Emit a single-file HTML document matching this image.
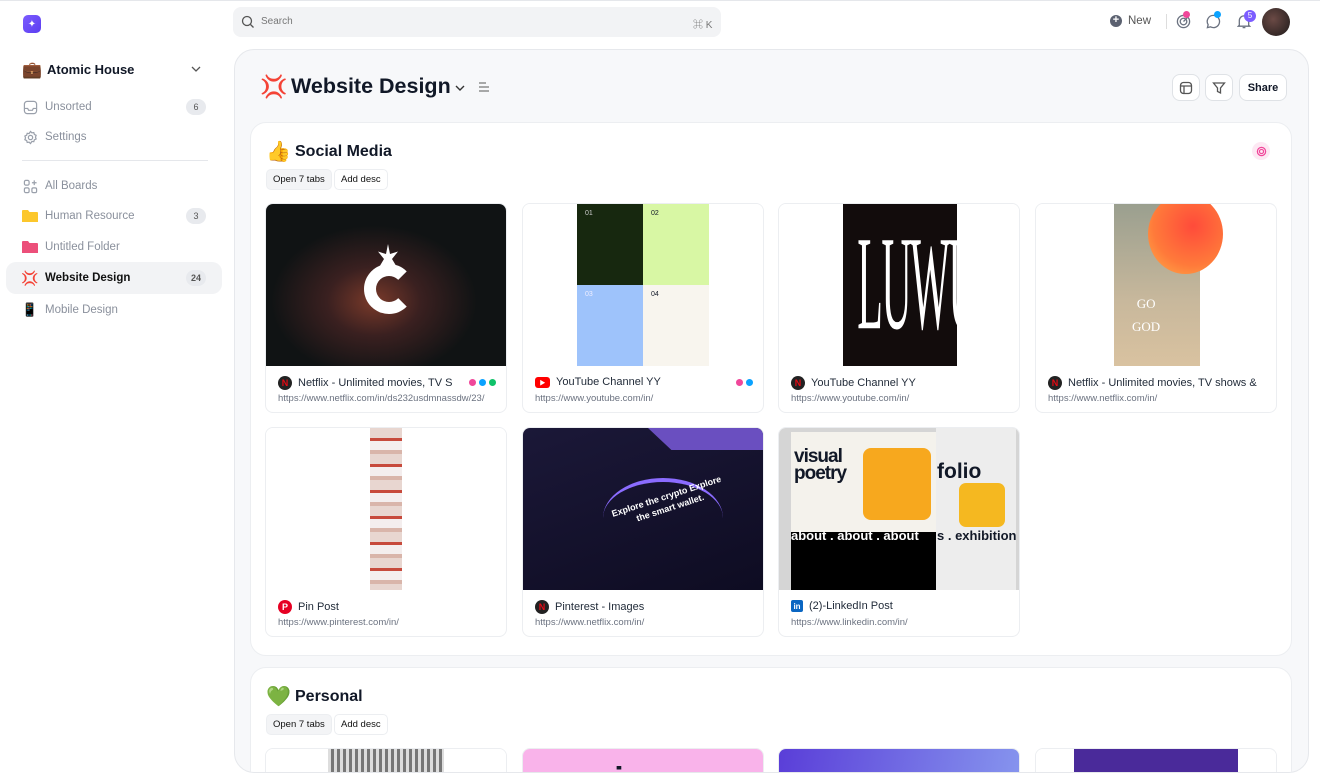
<!DOCTYPE html>
<html><head><meta charset="utf-8"><style>
*{box-sizing:border-box;margin:0;padding:0}
html,body{width:1320px;height:783px;overflow:hidden}
body{background:#fff;font-family:"Liberation Sans","Noto Sans CJK SC",sans-serif;color:#111827;position:relative}
.abs{position:absolute}
.side .item{position:absolute;left:6px;width:216px;height:32px;display:flex;align-items:center;padding-left:16px;font-size:11.5px;color:#8a909c}
.side .item .ic{width:16px;height:16px;margin-right:7px;display:flex;align-items:center;justify-content:center}
.badge{position:absolute;right:16px;width:20px;height:16px;border-radius:8px;background:#e8eaee;color:#555;font-size:9px;display:flex;align-items:center;justify-content:center}
.panel{left:234px;top:49px;width:1075px;height:724px;background:#f7f8fa;border:1px solid #e6e8ec;border-radius:20px;overflow:hidden}
.sec{position:absolute;left:15px;width:1042px;background:#fff;border:1px solid #eceef1;border-radius:16px;overflow:hidden}
.pill{position:absolute;height:21px;border:1px solid #eceef1;border-radius:5px;font-size:9.5px;display:flex;align-items:center;padding:0 6px;color:#111}
.card{position:absolute;width:242px;height:210px;border:1px solid #eceef1;border-radius:8px;background:#fff;overflow:hidden}
.card .img{position:absolute;left:0;top:0;width:100%;height:162px;background:#fff;overflow:hidden}
.card .t{position:absolute;left:12px;top:172px;font-size:11px;color:#1f2937;display:flex;align-items:center;white-space:nowrap;width:225px;overflow:hidden}
.card .u{position:absolute;left:12px;top:189px;font-size:9.5px;color:#6b7280;white-space:nowrap}
.fav{width:14px;height:14px;border-radius:50%;margin-right:6px;display:inline-flex;align-items:center;justify-content:center;font-size:9px;font-weight:bold;flex:none}
.dots{position:absolute;right:10px;top:175px;display:flex;gap:3px}
.dots i{width:7px;height:7px;border-radius:50%;display:block}
.btn{position:absolute;top:24px;height:27px;border:1px solid #dfe2e6;border-radius:8px;background:#fff;display:flex;align-items:center;justify-content:center;font-size:11px;font-weight:bold}
</style></head><body>
<div class="abs" style="left:0;top:0;width:1320px;height:1px;background:#e5e7eb"></div>
<div class="side">
<div class="abs" style="left:23px;top:15px;width:18px;height:18px;border-radius:5px;background:linear-gradient(135deg,#7c5cff,#5b3df0);display:flex;align-items:center;justify-content:center;color:#fff;font-size:10px">✦</div>
<div class="abs" style="left:22px;top:60px;font-size:16px">💼</div>
<div class="abs" style="left:47px;top:62px;font-size:13px;font-weight:bold">Atomic House</div>
<svg class="abs" style="left:190px;top:64px" width="12" height="10" viewBox="0 0 12 10"><path d="M2 3l4 4 4-4" fill="none" stroke="#555" stroke-width="1.3"/></svg>
<div class="item" style="top:91px"><span class="ic"><svg width="15" height="15" viewBox="0 0 16 16" fill="none" stroke="#9aa0ab" stroke-width="1.3"><rect x="1.5" y="1.5" width="13" height="13" rx="3"/><path d="M1.5 9h3.5l1 2h4l1-2h3.5"/></svg></span>Unsorted<span class="badge">6</span></div>
<div class="item" style="top:121px"><span class="ic"><svg width="15" height="15" viewBox="0 0 16 16" fill="none" stroke="#9aa0ab" stroke-width="1.3"><circle cx="8" cy="8" r="2.3"/><path d="M8 1.5l1.5 1.5 2-.3.6 2 1.9 1-.7 1.9.7 1.9-1.9 1-.6 2-2-.3L8 14.5 6.5 13l-2 .3-.6-2-1.9-1 .7-1.9L2 6.5l1.9-1 .6-2 2 .3z"/></svg></span>Settings</div>
<div class="abs" style="left:22px;top:160px;width:186px;height:1px;background:#e5e7eb"></div>
<div class="item" style="top:170px"><span class="ic"><svg width="15" height="15" viewBox="0 0 16 16" fill="none" stroke="#9aa0ab" stroke-width="1.3"><rect x="1.5" y="1.5" width="5" height="5" rx="1.5"/><rect x="1.5" y="9.5" width="5" height="5" rx="1.5"/><rect x="9.5" y="9.5" width="5" height="5" rx="1.5"/><path d="M12 1.5v5M9.5 4h5"/></svg></span>All Boards</div>
<div class="item" style="top:200px"><span class="ic"><svg width="16" height="14" viewBox="0 0 16 14"><path d="M0 2a1 1 0 0 1 1-1h5l1.5 2H15a1 1 0 0 1 1 1v9H0z" fill="#fcc72c"/></svg></span>Human Resource<span class="badge">3</span></div>
<div class="item" style="top:231px"><span class="ic"><svg width="16" height="14" viewBox="0 0 16 14"><path d="M0 2a1 1 0 0 1 1-1h5l1.5 2H15a1 1 0 0 1 1 1v9H0z" fill="#ec4f7a"/></svg></span>Untitled Folder</div>
<div class="item" style="top:262px;background:#f2f3f5;border-radius:10px;height:32px;color:#111;font-weight:600"><span class="ic" style="color:#e11;font-size:14px">💢</span>Website Design<span class="badge">24</span></div>
<div class="item" style="top:294px"><span class="ic" style="font-size:13px">📱</span>Mobile Design</div>
</div>
<div class="abs" style="left:233px;top:7px;width:488px;height:30px;background:#f2f3f5;border-radius:8px"></div>
<svg class="abs" style="left:241px;top:15px" width="14" height="14" viewBox="0 0 14 14" fill="none" stroke="#555" stroke-width="1.3"><circle cx="6" cy="6" r="4.5"/><path d="M9.5 9.5l3 3"/></svg>
<div class="abs" style="left:261px;top:16px;font-size:10px;color:#777">Search</div>
<div class="abs" style="left:693px;top:16px;font-size:10px;color:#777">⌘ K</div>
<div class="abs" style="left:1110px;top:15px;width:12px;height:12px;border-radius:50%;background:#5b6170;color:#fff;font-size:11px;line-height:11px;text-align:center;font-weight:bold">+</div>
<div class="abs" style="left:1128px;top:15px;font-size:11.5px;color:#555">New</div>
<div class="abs" style="left:1166px;top:14px;width:1px;height:15px;background:#ddd"></div>
<svg class="abs" style="left:1176px;top:14px" width="15" height="15" viewBox="0 0 16 16" fill="none" stroke="#6b7280" stroke-width="1.4"><circle cx="8" cy="8" r="6.5"/><circle cx="8" cy="8" r="3.5"/><path d="M8 8l5-5"/></svg>
<div class="abs" style="left:1183px;top:11px;width:7px;height:7px;border-radius:50%;background:#f0479a"></div>
<svg class="abs" style="left:1206px;top:14px" width="15" height="15" viewBox="0 0 16 16" fill="none" stroke="#6b7280" stroke-width="1.4"><path d="M8 1.5a6.5 6.5 0 1 1-3.2 12.2L1.5 14.5l.8-3.1A6.5 6.5 0 0 1 8 1.5z"/></svg>
<div class="abs" style="left:1214px;top:11px;width:7px;height:7px;border-radius:50%;background:#0aa2ff"></div>
<svg class="abs" style="left:1237px;top:14px" width="14" height="15" viewBox="0 0 14 16" fill="none" stroke="#6b7280" stroke-width="1.4"><path d="M2 12V7a5 5 0 0 1 10 0v5l1 1H1zM5.5 14.5h3"/></svg>
<div class="abs" style="left:1244px;top:10px;width:12px;height:12px;border-radius:50%;background:#7c5cff;color:#fff;font-size:8px;text-align:center;line-height:12px">5</div>
<div class="abs" style="left:1262px;top:8px;width:28px;height:28px;border-radius:50%;background:radial-gradient(circle at 40% 40%,#6b4a45,#1e1a1a)"></div>
<div class="abs panel">
<div class="abs" style="left:25px;top:24px;font-size:22px;color:#e11">💢</div>
<div class="abs" style="left:56px;top:24px;font-size:21.5px;font-weight:bold;color:#111827">Website Design</div>
<svg class="abs" style="left:219px;top:33px" width="12" height="10" viewBox="0 0 12 10"><path d="M2 3l4 4 4-4" fill="none" stroke="#333" stroke-width="1.4"/></svg>
<svg class="abs" style="left:243px;top:31px" width="12" height="12" viewBox="0 0 12 12" stroke="#777" stroke-width="1.2"><path d="M1 2h7M1 6h10M1 10h10"/></svg>
<div class="btn" style="left:937px;width:28px"><svg width="14" height="14" viewBox="0 0 14 14" fill="none" stroke="#555" stroke-width="1.3"><rect x="1.5" y="1.5" width="11" height="11" rx="3"/><path d="M1.5 5h11M5 5v7.5"/></svg></div>
<div class="btn" style="left:970px;width:28px"><svg width="14" height="14" viewBox="0 0 14 14" fill="none" stroke="#555" stroke-width="1.3"><path d="M1.5 2h11L8.5 7v5l-3-1.5V7z"/></svg></div>
<div class="btn" style="left:1004px;width:48px">Share</div>

<div class="sec" style="top:72px;height:534px">
<div class="abs" style="left:15px;top:16px;font-size:20px">👍</div>
<div class="abs" style="left:44px;top:20px;font-size:16px;font-weight:bold">Social Media</div>
<div class="abs" style="left:1001px;top:19px;width:18px;height:18px;border-radius:50%;background:#fde8f3;display:flex;align-items:center;justify-content:center"><svg width="11" height="11" viewBox="0 0 16 16" fill="none" stroke="#f0479a" stroke-width="1.8"><circle cx="8" cy="8" r="6"/><circle cx="8" cy="8" r="3"/></svg></div>
<div class="pill" style="left:15px;top:46px;background:#f3f4f6">Open 7 tabs</div>
<div class="pill" style="left:83px;top:46px">Add desc</div>

<div class="card" style="left:14px;top:80px"><div class="img" style="background:radial-gradient(ellipse at 45% 60%,#7a3a2a 0,#3a2020 25%,#101314 55%)"><div class="abs" style="left:98px;top:60px;width:50px;height:50px;border-radius:50%;border:12px solid #fff;border-right-color:transparent"></div><div class="abs" style="left:112px;top:40px;width:20px;height:25px;background:#fff;clip-path:polygon(50% 0,60% 40%,100% 30%,70% 60%,100% 100%,0 100%,30% 60%,0 30%,40% 40%)"></div></div>
<div class="t"><span class="fav" style="background:#222;color:#e50914">N</span>Netflix - Unlimited movies, TV S</div><div class="dots"><i style="background:#f0479a"></i><i style="background:#0aa2ff"></i><i style="background:#10c26a"></i></div><div class="u">https://www.netflix.com/in/ds232usdmnassdw/23/</div></div>

<div class="card" style="left:271px;top:80px"><div class="img"><div class="abs" style="left:54px;top:0;width:66px;height:81px;background:#17280f;color:#ccc;font-size:7px;padding:6px 8px">01</div><div class="abs" style="left:120px;top:0;width:66px;height:81px;background:#d8f7a4;font-size:7px;padding:6px 8px">02</div><div class="abs" style="left:54px;top:81px;width:66px;height:81px;background:#9ec3fb;font-size:7px;padding:6px 8px;color:#eef">03</div><div class="abs" style="left:120px;top:81px;width:66px;height:81px;background:#f8f5ee;font-size:7px;padding:6px 8px">04</div></div>
<div class="t"><span class="fav" style="background:#f00;border-radius:3px;width:15px;height:11px;color:#fff;font-size:6px">▶</span>YouTube Channel YY</div><div class="dots"><i style="background:#f0479a"></i><i style="background:#0aa2ff"></i></div><div class="u">https://www.youtube.com/in/</div></div>

<div class="card" style="left:527px;top:80px"><div class="img"><div class="abs" style="left:64px;top:0;width:114px;height:162px;background:#120c0c;overflow:hidden"><div style="color:#fff;font-family:'Liberation Serif',serif;font-size:56px;line-height:162px;text-align:center;transform:scale(0.75,2.4);letter-spacing:-2px">LUWU</div></div></div>
<div class="t"><span class="fav" style="background:#222;color:#e50914">N</span>YouTube Channel YY</div><div class="u">https://www.youtube.com/in/</div></div>

<div class="card" style="left:784px;top:80px"><div class="img"><div class="abs" style="left:78px;top:0;width:86px;height:162px;background:linear-gradient(#9a9f8f,#c8b89c 60%,#d9c2a0)"></div><div class="abs" style="left:112px;top:-10px;width:75px;height:80px;border-radius:50%;background:radial-gradient(circle at 60% 40%,#ff4b3a,#ff7a3a 60%,#ffb24a)"></div><div class="abs" style="left:96px;top:88px;color:#fff;font-family:'Liberation Serif',serif;font-size:13px;line-height:23px;text-align:center">GO<br>GOD</div></div>
<div class="t"><span class="fav" style="background:#222;color:#e50914">N</span>Netflix - Unlimited movies, TV shows &amp;</div><div class="u">https://www.netflix.com/in/</div></div>

<div class="card" style="left:14px;top:304px"><div class="img"><div class="abs" style="left:104px;top:0;width:32px;height:162px;background:repeating-linear-gradient(#e8d6d0 0 10px,#c74a3c 10px 13px,#f4eeee 13px 22px,#d9b5aa 22px 26px)"></div></div>
<div class="t"><span class="fav" style="background:#e60023;color:#fff">P</span>Pin Post</div><div class="u">https://www.pinterest.com/in/</div></div>

<div class="card" style="left:271px;top:304px"><div class="img" style="background:linear-gradient(160deg,#1b1838,#0e0c22)"><div class="abs" style="left:125px;top:0;width:117px;height:22px;background:#6a4fc0;clip-path:polygon(0 0,100% 0,100% 100%,20% 100%)"></div><div class="abs" style="left:80px;top:50px;width:120px;height:80px;border-radius:50%;border-top:4px solid #8b6cff"></div><div class="abs" style="left:88px;top:62px;color:#fff;font-size:9px;font-weight:bold;transform:rotate(-18deg);text-align:center;line-height:12px">Explore the crypto Explore<br>the smart wallet.</div></div>
<div class="t"><span class="fav" style="background:#222;color:#e50914">N</span>Pinterest - Images</div><div class="u">https://www.netflix.com/in/</div></div>

<div class="card" style="left:527px;top:304px"><div class="img" style="background:#d5d5d5"><div class="abs" style="left:12px;top:4px;width:145px;height:100px;background:#f4f2ec"></div><div class="abs" style="left:15px;top:20px;font-size:19px;font-weight:bold;line-height:17px;letter-spacing:-1px">visual<br>poetry</div><div class="abs" style="left:84px;top:20px;width:68px;height:72px;background:#f7a81e;border-radius:8px"></div><div class="abs" style="left:12px;top:104px;width:145px;height:58px;background:#000"></div><div class="abs" style="left:12px;top:100px;font-size:13px;font-weight:bold;color:#fff">about . about . about</div><div class="abs" style="left:157px;top:0;width:80px;height:162px;background:#ededed"></div><div class="abs" style="left:158px;top:32px;font-size:21px;font-weight:bold">folio</div><div class="abs" style="left:180px;top:55px;width:46px;height:44px;background:#f5b820;border-radius:7px"></div><div class="abs" style="left:158px;top:100px;font-size:13px;font-weight:bold">s . exhibition</div></div>
<div class="t"><span class="fav" style="background:#0a66c2;color:#fff;border-radius:2px;width:12px;height:12px;font-size:8px">in</span>(2)-LinkedIn Post</div><div class="u">https://www.linkedin.com/in/</div></div>
</div>

<div class="sec" style="top:617px;height:140px">
<div class="abs" style="left:15px;top:16px;font-size:20px">💚</div>
<div class="abs" style="left:44px;top:20px;font-size:16px;font-weight:bold">Personal</div>
<div class="pill" style="left:15px;top:46px;background:#f3f4f6">Open 7 tabs</div>
<div class="pill" style="left:83px;top:46px">Add desc</div>
<div class="card" style="left:14px;top:80px"><div class="img"><div class="abs" style="left:62px;top:0;width:116px;height:40px;background:repeating-linear-gradient(90deg,#ddd 0 3px,#777 3px 6px)"></div></div></div>
<div class="card" style="left:271px;top:80px"><div class="img" style="background:#f9b3ea"><div class="abs" style="left:14px;top:14px;font-size:34px;font-weight:bold;letter-spacing:-1px;line-height:34px">growing</div></div></div>
<div class="card" style="left:527px;top:80px"><div class="img" style="background:linear-gradient(100deg,#5a3ed8,#8a9cf0)"></div></div>
<div class="card" style="left:784px;top:80px"><div class="img"><div class="abs" style="left:38px;top:0;width:164px;height:40px;background:#4a2a9a"></div></div></div>
</div>
</div>
</body></html>
